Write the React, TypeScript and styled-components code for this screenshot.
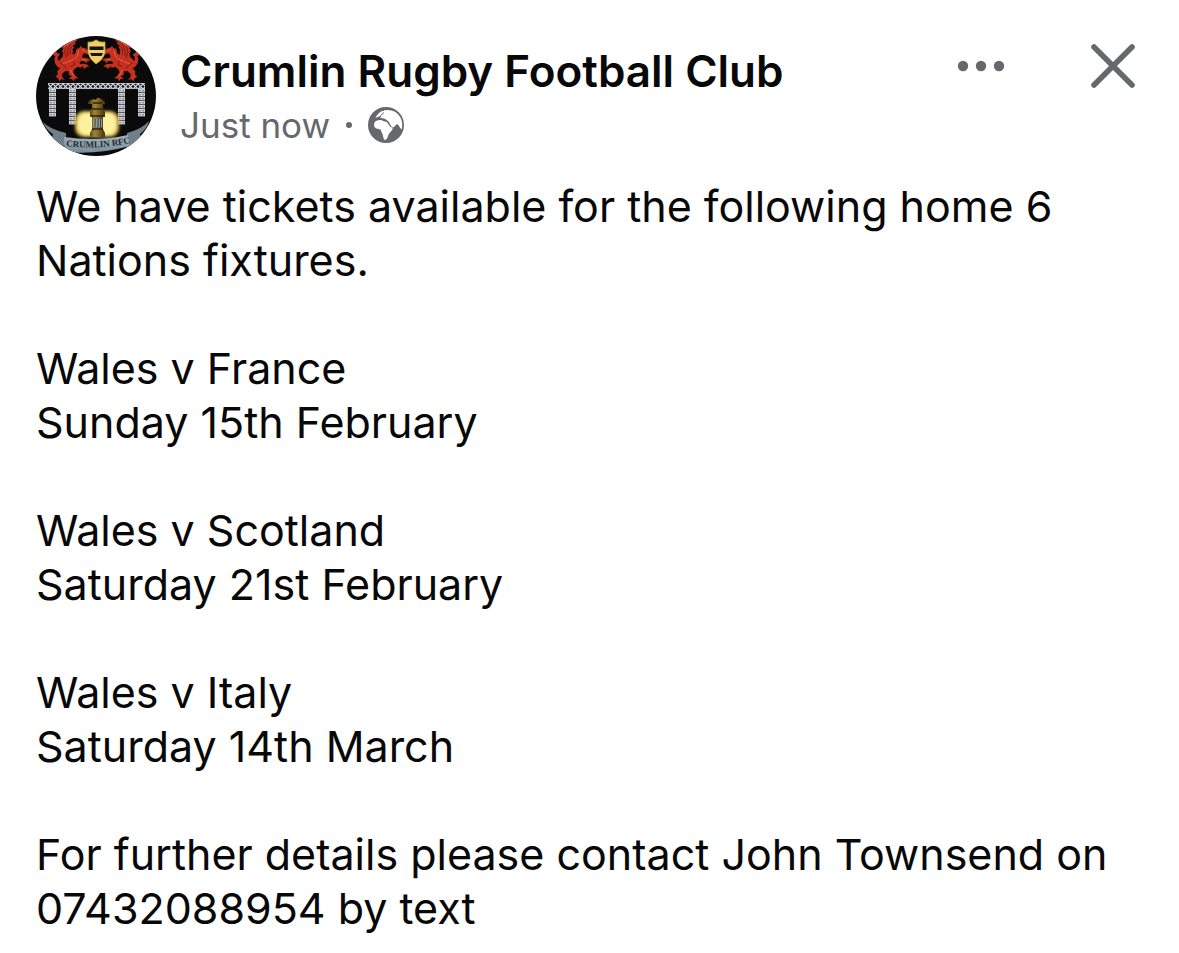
import React from "react";
import styled, { createGlobalStyle } from "styled-components";

const GlobalStyle = createGlobalStyle`
  *, *::before, *::after { box-sizing: border-box; }
  body {
    margin: 0;
    background: #ffffff;
    color: #080809;
    font-family: Inter, "Liberation Sans", sans-serif;
  }
`;

const Post = styled.article`
  padding: 36px 36px 18px;
`;

const Header = styled.header`
  display: flex;
  align-items: flex-start;
  gap: 24px;
`;

const AvatarLink = styled.a`
  display: block;
  flex: none;
  width: 120px;
  height: 120px;
  border-radius: 50%;

  svg { display: block; width: 100%; height: 100%; }
`;

const Identity = styled.div`
  flex: 1;
  min-width: 0;
  padding-top: 8px;
`;

const PageName = styled.h1`
  margin: 0;
  font-size: 44px;
  line-height: 54px;
  font-weight: 600;

  a { color: inherit; text-decoration: none; }
`;

const Meta = styled.div`
  display: flex;
  align-items: center;
  gap: 16px;
  font-size: 35px;
  line-height: 54px;
  color: #65686c;

  svg { display: block; }
`;

const Separator = styled.span`
  width: 6px;
  height: 6px;
  border-radius: 50%;
  background: currentColor;
`;

const Actions = styled.div`
  display: flex;
  flex: none;
  gap: 72px;
`;

const IconButton = styled.button`
  display: flex;
  align-items: center;
  justify-content: center;
  width: 60px;
  height: 60px;
  padding: 0;
  border: 0;
  background: none;
  color: #65686c;
  cursor: pointer;
`;

const Message = styled.div`
  margin-top: 23px;
  font-size: 43px;
  line-height: 54px;
`;

const Paragraph = styled.p`
  margin: 0;
  white-space: pre-line;

  & + & { margin-top: 54px; }
`;

const paragraphs = [
  "We have tickets available for the following home 6 Nations fixtures.",
  "Wales v France\nSunday 15th February",
  "Wales v Scotland\nSaturday 21st February",
  "Wales v Italy\nSaturday 14th March",
  "For further details please contact John Townsend on 07432088954 by text",
];

function Dragon() {
  return (
    <g>
      <path
        fill="#c5301f"
        d="M129 8 L108 15 L92 22 L80 27 L75 34 L82 36 L78 46 L82 52 L80 62 L74 68 L69 74 L65 72 L66 62 L72 56 L64 50 L56 44 L48 50 L42 49 L42 60 L50 57 L58 60 L55 70 L57 82 L64 92 L72 97 L64 106 L65 116 L58 122 L66 127 L70 136 L76 130 L86 131 L78 122 L78 114 L88 105 L98 106 L99 116 L108 121 L98 128 L108 129 L113 136 L116 128 L127 127 L117 118 L111 109 L115 100 L125 92 L134 95 L139 91 L146 99 L151 93 L160 92 L152 85 L142 83 L134 85 L130 80 L136 75 L146 76 L151 82 L155 75 L164 73 L155 67 L142 66 L138 62 L141 55 L147 51 L152 56 L158 50 L155 42 L148 37 L139 35 L134 29 L130 36 L121 39 L119 50 L113 56 L109 52 L112 44 L108 42 L114 35 L111 29 L120 22 L116 18 Z"
      />
      <path
        fill="none"
        stroke="#7c1a12"
        strokeWidth="3"
        d="M116 15 L101 28 L94 46 L96 60 M108 31 L102 42 L103 56 M91 28 L86 48 L92 66 M72 80 L85 89 L92 99 M112 74 L116 86 L103 92"
      />
      <path
        fill="none"
        stroke="#e8604a"
        strokeWidth="3"
        d="M118 13 L98 23 L84 32 M128 44 L124 60 L114 70 L99 76 L80 84 M138 41 L147 46 M104 101 L108 111 L113 121 M138 71 L149 72"
      />
    </g>
  );
}

function Pier({ x, rows }: { x: number; rows: number }) {
  return (
    <g transform={`translate(${x} 53)`}>
      {Array.from({ length: rows }, (_, row) => (
        <g key={row} transform={`translate(0 ${row * 4})`}>
          <rect width="7" height="3.4" fill="#cfcfd8" />
          <circle cx="1.9" cy="1.7" r="0.7" fill="#5d5d68" />
          <circle cx="5.1" cy="1.7" r="0.7" fill="#5d5d68" />
        </g>
      ))}
    </g>
  );
}

function ClubCrest() {
  return (
    <svg viewBox="0 0 120 120" role="img" aria-label="Crumlin RFC crest">
      <defs>
        <clipPath id="disc"><circle cx="60" cy="60" r="60" /></clipPath>
        <filter id="soft" x="-30%" y="-30%" width="160%" height="160%">
          <feGaussianBlur stdDeviation="1.6" />
        </filter>
        <linearGradient id="brass">
          <stop offset="0" stopColor="#3f300f" />
          <stop offset="0.4" stopColor="#a08538" />
          <stop offset="1" stopColor="#43330f" />
        </linearGradient>
        <linearGradient id="ribbon" x2="0" y2="1">
          <stop offset="0" stopColor="#a3b3bc" />
          <stop offset="1" stopColor="#7b8d98" />
        </linearGradient>
        <pattern id="lattice" x="12" y="48" width="5" height="5" patternUnits="userSpaceOnUse">
          <rect width="5" height="5" fill="#1c1c26" />
          <path d="M0 0L5 5M5 0L0 5" stroke="#dcdce4" strokeWidth="1.2" />
        </pattern>
        <path id="motto" d="M30 110 Q62 114 94 107" />
      </defs>
      <g clipPath="url(#disc)">
        <rect width="120" height="120" fill="#0b0a0a" />
        <g transform="scale(0.3333)">
          <Dragon />
          <g transform="translate(362 0) scale(-1 1)"><Dragon /></g>
        </g>
        <path d="M52 6 Q56 7 60 4 Q64 7 69 6 V16 Q68 23 60 28 Q53 23 52 16 Z" fill="#f1cf63" stroke="#cda545" strokeWidth="0.8" />
        <path d="M53.500 10.500 H67.500 V14 H53.500 Z M54 17 H67 L65.500 20 H55.500 Z" fill="#16120c" />
        <Pier x={13} rows={7} />
        <Pier x={33} rows={9} />
        <Pier x={82} rows={9} />
        <Pier x={102} rows={7} />
        <rect x="12" y="47" width="97" height="6" fill="url(#lattice)" />
        <path d="M12 47.5H109M12 52.5H109" stroke="#c8c8d0" strokeWidth="0.8" />
        <g filter="url(#soft)">
          <rect x="39" y="75" width="44" height="26" rx="9" fill="#d9b548" />
          <rect x="42" y="77" width="38" height="22" rx="8" fill="#fdf2a0" />
        </g>
        <path d="M52 66 Q56 62 60 64 Q61 60 65 63 L69 66 V68 H67 V72 L69 76 V81 H67 V93 L69 97 V101 H54 V97 L56 93 V81 H54 V76 L56 72 V68 H52 Z" fill="url(#brass)" />
        <path d="M57 67H66M56 73H67M55 80H68M56 93H67" stroke="#2f240b" strokeWidth="1.4" />
        <rect x="57" y="83" width="9" height="8" fill="#8fa0a8" />
        <path d="M59 83V91M62 83V91M64.500 83V91" stroke="#323b40" />
        <path d="M7 86 Q13 93 30 97 V111 Q21 108 16 102 L17 98 Q10 94 7 86 Z" fill="#6f808a" />
        <path d="M113 85 Q106 93 91 97 V111 Q100 108 105 102 L104 98 Q111 93 113 85 Z" fill="#6f808a" />
        <path d="M28 101 Q61 106 92 99 L94 110 Q61 119 29 116 Z" fill="url(#ribbon)" />
        <text fontFamily="Liberation Serif, serif" fontSize="9" fontWeight="700" fill="#20292f">
          <textPath href="#motto">CRUMLIN RFC</textPath>
        </text>
      </g>
    </svg>
  );
}

function PublicGlobe() {
  return (
    <svg width="36" height="36" viewBox="0 0 108 108" role="img" aria-label="Public">
      <circle cx="54" cy="54" r="54" fill="#65686c" />
      <path
        fill="#fff"
        d="M22 33 Q30 17 43 11 L50 13 L42 20 L35 28 Z M37 33 L40 25 Q50 20 48 10 Q82 5 97 31 Q106 48 101 68 L95 61 Q90 50 86 52 L78 60 Q73 64 68 55 Q64 46 60 42 Q52 35 44 34 Z"
      />
      <path
        fill="#fff"
        d="M18 50 Q20 42 29 40 L40 39 Q46 44 55 44 Q60 47 63 55 Q66 61 74 62 Q75 68 68 74 Q62 79 60 88 Q56 99 51 99 Q46 97 45 87 Q44 79 40 74 Q40 67 33 66 Q23 66 19 59 Z"
      />
    </svg>
  );
}

export default function App() {
  return (
    <>
      <GlobalStyle />
      <Post>
        <Header>
          <AvatarLink href="#crumlin-rfc"><ClubCrest /></AvatarLink>
          <Identity>
            <PageName><a href="#crumlin-rfc">Crumlin Rugby Football Club</a></PageName>
            <Meta>
              <span>Just now</span>
              <Separator />
              <PublicGlobe />
            </Meta>
          </Identity>
          <Actions>
            <IconButton type="button" aria-label="More options">
              <svg width="48" height="12" viewBox="0 0 48 12" fill="currentColor">
                <circle cx="6" cy="6" r="5.2" />
                <circle cx="24" cy="6" r="5.2" />
                <circle cx="42" cy="6" r="5.2" />
              </svg>
            </IconButton>
            <IconButton type="button" aria-label="Close">
              <svg width="44" height="44" viewBox="0 0 44 44" fill="none" stroke="currentColor" strokeWidth="5.6" strokeLinecap="round">
                <path d="M3 3L41 41M41 3L3 41" />
              </svg>
            </IconButton>
          </Actions>
        </Header>
        <Message>
          {paragraphs.map((text) => <Paragraph key={text}>{text}</Paragraph>)}
        </Message>
      </Post>
    </>
  );
}
